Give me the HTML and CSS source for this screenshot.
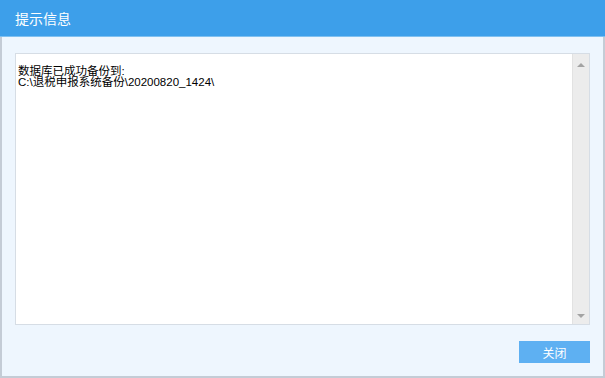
FILE: index.html
```html
<!DOCTYPE html>
<html lang="zh-CN">
<head>
    <meta charset="UTF-8">
    <title>提示信息</title>
    <link rel="stylesheet" href="styles.css">
</head>
<body>
    <div class="dialog">
        <div class="title-bar">提示信息</div>
        <div class="dialog-body">
            <div class="message-box">
                <div class="message-text">
                    <div class="line">数据库已成功备份到:</div>
                    <div class="line">C:\退税申报系统备份\20200820_1424\</div>
                </div>
                <div class="scrollbar">
                    <span class="arrow arrow-up"></span>
                    <span class="arrow arrow-down"></span>
                </div>
            </div>
            <div class="footer">
                <button class="close-btn">关闭</button>
            </div>
        </div>
    </div>
</body>
</html>
```

FILE: styles.css
```css
body {
    margin: 0;
    font-family: "Noto Sans CJK SC", "DejaVu Sans", sans-serif;
    background: #fff;
}
.dialog {
    width: 605px;
    height: 378px;
    box-sizing: border-box;
    display: flex;
    flex-direction: column;
    background: #eef6fe;
    border-left: 2px solid #c4ccd6;
    border-right: 2px solid #c4ccd6;
    border-bottom: 2px solid #c4ccd6;
}
.title-bar {
    height: 37px;
    margin: 0 -2px;
    padding-left: 15px;
    background: #3d9fea;
    color: #fff;
    font-size: 14px;
    line-height: 36px;
    border-bottom: 1px solid #7fc0f0;
    box-sizing: border-box;
}
.dialog-body {
    flex: 1;
    display: flex;
    flex-direction: column;
    padding: 16px 13px 0 13px;
}
.message-box {
    height: 272px;
    box-sizing: border-box;
    display: flex;
    background: #fff;
    border: 1px solid #d6dde5;
}
.message-text {
    flex: 1;
    padding: 12px 2px;
    font-family: "Liberation Sans", "Noto Sans CJK SC", sans-serif;
    font-size: 11.5px;
    color: #000;
}
.line {
    height: 11px;
    line-height: 11px;
    overflow: visible;
    white-space: nowrap;
}
.scrollbar {
    width: 16px;
    background: #ececec;
    border-left: 1px solid #e2e2e2;
    display: flex;
    flex-direction: column;
    justify-content: space-between;
    align-items: center;
    padding: 9px 0 6px;
}
.arrow {
    width: 0;
    height: 0;
    border-left: 4px solid transparent;
    border-right: 4px solid transparent;
}
.arrow-up {
    border-bottom: 4px solid #a3a3a3;
}
.arrow-down {
    border-top: 4px solid #a3a3a3;
}
.footer {
    display: flex;
    justify-content: flex-end;
    padding-top: 16px;
}
.close-btn {
    width: 71px;
    height: 22px;
    border: none;
    background: #5eb0f2;
    color: #fff;
    font-family: "Noto Sans CJK SC", sans-serif;
    font-size: 12px;
    padding: 0;
}
```
